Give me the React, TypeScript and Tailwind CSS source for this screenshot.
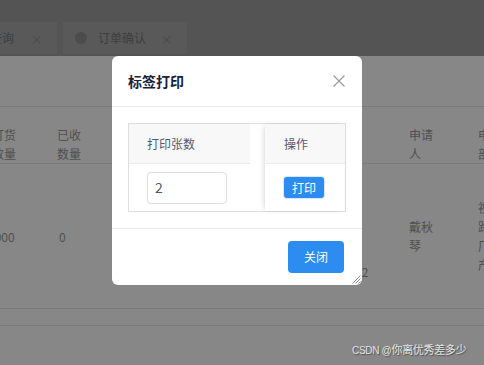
const cjk = { fontFamily: '"Noto Sans CJK SC", "Noto Sans", sans-serif' }

function Tab({ label, dot, width }: { label: string; dot?: boolean; width: string }) {
  return (
    <div className={`flex items-center h-[32px] bg-[#595959] shrink-0 ${width}`}>
      {dot && <span className="ml-[12px] w-[12px] h-[12px] rounded-full bg-[#4c4c4c]" />}
      <span className={`text-[12px] text-[#3e3e3e] ${dot ? 'ml-[11px]' : 'ml-[-10px]'}`}>{label}</span>
      <span className="ml-auto mr-[14px] text-[13px] text-[#4a4a4a] leading-none">×</span>
    </div>
  )
}

function Background() {
  return (
    <div className="absolute inset-0 bg-[#878787] text-[12px] text-[#4f4f4f]" style={cjk}>
      <div className="h-[22px] bg-[#545454]" />
      <div className="h-[34px] bg-[#545454] flex gap-[6px]">
        <Tab label="查询" width="w-[57px]" />
        <Tab label="订单确认" dot width="w-[124px]" />
      </div>
      <div className="h-[50px]" />
      <div className="flex h-[58px] border-t border-b border-[#7b7b7b] ml-[-8px] leading-[19px] pt-[18px]">
        <div className="w-[65px] shrink-0">订货<br />数量</div>
        <div className="w-[352px] shrink-0">已收<br />数量</div>
        <div className="w-[69px] shrink-0">申请<br />人</div>
        <div className="shrink-0">申请<br />部门</div>
      </div>
      <div className="flex h-[145px] border-b border-[#7b7b7b] ml-[-12px] leading-[19px]">
        <div className="w-[71px] shrink-0 self-center">1000</div>
        <div className="w-[288px] shrink-0 self-center">0</div>
        <div className="w-[62px] shrink-0 pl-[8px] pt-[98px]">12</div>
        <div className="w-[69px] shrink-0 self-center">戴秋<br />琴</div>
        <div className="shrink-0 self-center">视<br />路<br />厂<br />产</div>
      </div>
      <div className="h-[17px] border-b border-[#7b7b7b]" />
      <div className="absolute left-[352px] top-[341px] text-[11px] text-[#e6e6e6] [text-shadow:1px_1px_1px_rgba(0,0,0,0.45)] tracking-[-0.3px] whitespace-nowrap">
        <span className="text-[10px]" style={{ fontFamily: '"Liberation Sans", sans-serif' }}>CSDN @</span>你离优秀差多少
      </div>
    </div>
  )
}

function Modal() {
  return (
    <div className="absolute left-[112px] top-[56px] w-[250px] bg-white rounded-[6px] text-[#515a6e]" style={cjk}>
      <div className="h-[51px] border-b border-[#e8eaec] px-4 flex items-center justify-between">
        <span className="text-[14px] font-semibold text-[#17233d]">标签打印</span>
        <svg width="12" height="12" viewBox="0 0 12 12" className="mr-[1px]">
          <path d="M0.5 0.5L11.5 11.5M11.5 0.5L0.5 11.5" stroke="#999" strokeWidth="1.1" />
        </svg>
      </div>
      <div className="p-4">
        <div className="flex border border-[#dcdee2] text-[12px]">
          <div className="w-[121px] shrink-0">
            <div className="h-[40px] bg-[#f8f8f9] border-b border-[#e8eaec] flex items-center pl-[18px]">打印张数</div>
            <div className="h-[47px] flex items-center pl-[18px]">
              <div className="w-[80px] h-[32px] border border-[#dcdee2] rounded-[4px] flex items-center pl-[7px] text-[14px]">2</div>
            </div>
          </div>
          <div className="w-[15px] shrink-0" />
          <div className="w-[80px] shrink-0 bg-white shadow-[-2px_0_6px_-2px_rgba(0,0,0,0.2)]">
            <div className="h-[40px] bg-[#f8f8f9] border-b border-[#e8eaec] flex items-center pl-[19px]">操作</div>
            <div className="h-[47px] flex items-center pl-[18px]">
              <div className="h-[23px] w-[42px] rounded-[4px] bg-[#d5e8fc] p-[1px]">
                <div className="h-full w-full rounded-[3px] bg-[#2d8cf0] text-white flex items-center justify-center">打印</div>
              </div>
            </div>
          </div>
        </div>
      </div>
      <div className="border-t border-[#e8eaec] py-3 pr-[18px] flex justify-end">
        <div className="w-[56px] h-[32px] rounded-[4px] bg-[#2d8cf0] text-white text-[12px] flex items-center justify-center">关闭</div>
      </div>
      <svg width="10" height="10" viewBox="0 0 10 10" className="absolute right-[1px] bottom-[1px]">
        <path d="M9.5 1.5L1.5 9.5M9.5 4.5L4.5 9.5M9.5 7.5L7.5 9.5" stroke="#777" strokeWidth="0.9" />
      </svg>
    </div>
  )
}

export default function App() {
  return (
    <div className="relative w-[484px] h-[365px] overflow-hidden">
      <Background />
      <Modal />
    </div>
  )
}
